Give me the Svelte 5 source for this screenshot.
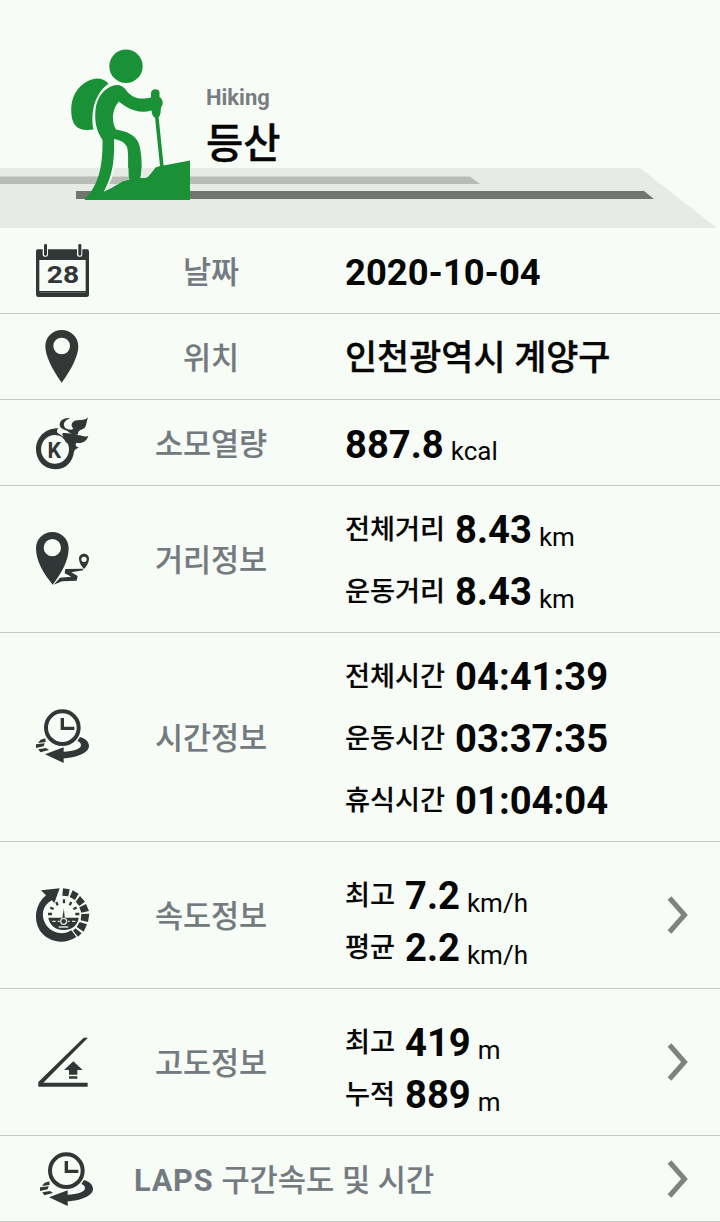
<script>
  const rows = [
    { icon: 'calendar', box: '0 -21 240 255', h: 86, label: '날짜', kind: 'date', lines: [{ v: '2020-10-04' }] },
    { icon: 'pin', box: '0 -18 240 255', h: 86, label: '위치', kind: 'place', lines: [{ v: '인천광역시 계양구' }] },
    { icon: 'kcal', box: '0 -24 240 255', h: 86, label: '소모열량', kind: 'one', lines: [{ v: '887.8', u: 'kcal' }] },
    {
      icon: 'route', box: '0 -117 240 438', h: 147, label: '거리정보', kind: 'wide',
      lines: [{ k: '전체거리', v: '8.43', u: 'km' }, { k: '운동거리', v: '8.43', u: 'km' }]
    },
    {
      icon: 'clock', box: '0 -207 240 624', h: 209, label: '시간정보', kind: 'wide',
      lines: [{ k: '전체시간', v: '04:41:39' }, { k: '운동시간', v: '03:37:35' }, { k: '휴식시간', v: '01:04:04' }]
    },
    {
      icon: 'speed', box: '0 -114 240 438', h: 147, label: '속도정보', kind: 'tight', more: true,
      lines: [{ k: '최고', v: '7.2', u: 'km/h' }, { k: '평균', v: '2.2', u: 'km/h' }]
    },
    {
      icon: 'slope', box: '0 -108 240 438', h: 147, label: '고도정보', kind: 'tight', more: true,
      lines: [{ k: '최고', v: '419', u: 'm' }, { k: '누적', v: '889', u: 'm' }]
    },
    { icon: 'clock', box: '-12 -27 240 255', h: 86, lead: 'LAPS', label: '구간속도 및 시간', kind: 'laps', more: true, lines: [] }
  ];
</script>

<main>
  <header>
    <svg class="scene" width="720" height="228" viewBox="0 0 720 228">
      <path d="M0 168H640L717 228H0Z" fill="#e7ebe5" />
      <path d="M0 176.500H470L480 184H0Z" fill="#b7bcb6" />
      <path d="M76 191H644L654 199H76Z" fill="#70756f" />
      <g fill="#1a9137">
        <circle cx="126" cy="66.300" r="16.700" />
        <path d="M108.500 83.500C103 77.500 95 77 88 81C76 87 71 98 71.200 111C71.500 125 77 132 93.500 129.500C91 117 92 96 108.500 83.500Z" />
        <path d="M109 87.500C115 83.500 122 84 126 90C131 97 138 100.500 151 97.500V93C151 88 159.500 88 159.500 92.500V97C163.500 99.500 163.500 104.500 161 107.500L160.500 113Q160 116.500 158.600 117L163.600 165.500L190 160.500V200H84.800L85.500 197.500L88.500 195C97 184 103 170 102.500 140C96 130 94.500 121 95.500 110C96.500 100 101 92 109 87.500Z" />
      </g>
      <path d="M119 101.500C127 108 137 114.500 151.500 110.500Q152 116.500 155 117.500L160 166L155.500 167.500Q150 174.500 145.500 178H140.500C142.500 170 142 154 139 144C136 135 126 131 116 129.500C111 121 112 109 119 101.500Z" fill="#f8fcf6" />
      <path d="M114 139C120 140 124.500 142 127 147C129 153 127.500 168 128.500 177L129.500 179.500L123 181C115 186 110 189 104 191.500C109 181 115 170 114 139Z" fill="#f8fcf6" />
      <path d="M114 168H121L128.500 168V176.500H112.100Q113.500 172 114 168Z" fill="#e7ebe5" />
      <path d="M112.200 176.500H128.300L129.500 179.500L123 181L115.200 185H108.500Q111 181 112.200 176.500Z" fill="#b7bcb6" />
      <path d="M108.900 184H117L104 191.300Z" fill="#e7ebe5" />
      <path d="M141.800 168H155L148.500 176.500L145.500 178H140.500Z" fill="#e7ebe5" />
    </svg>
    <p class="sub">Hiking</p>
    <h1>등산</h1>
  </header>

  {#each rows as row}
    <section class={row.kind} style:height="{row.h}px">
      <svg class="icon" viewBox={row.box} style:height="{row.h - 1}px">
        {#if row.icon === 'calendar'}
          <path fill-rule="evenodd" d="M38 43H186Q192 43 192 50V179Q192 186 185 186H40Q33 186 33 179V50Q33 43 38 43ZM43 75V168H182V75Z" />
          <path d="M44 172.500H181" stroke="#747b79" stroke-width="2" />
          <rect x="53" y="25" width="16" height="40" rx="6" fill="#f8fcf6" />
          <rect x="156" y="25" width="16" height="40" rx="6" fill="#f8fcf6" />
          <rect x="57" y="27" width="9" height="35" rx="4" />
          <rect x="160" y="27" width="9" height="35" rx="4" />
          <text x="114" y="144" text-anchor="middle" font-size="74" textLength="97" lengthAdjust="spacingAndGlyphs">28</text>
        {:else if row.icon === 'pin'}
          <path fill="#353737" fill-rule="evenodd" d="M110 30C137 30 160 51 160 79C160 108 139 149 110 188C82 149 61 108 61 79C61 51 83 30 110 30ZM110 53A25 25 0 1 0 110 103A25 25 0 1 0 110 53Z" />
        {:else if row.icon === 'kcal'}
          <path fill-rule="evenodd" d="M101 61C64 60 33 86 33 124C33 159 59 184 90 184C124 184 143 161 147 131C149 124 154 121 162 119C152 115 149 109 155 104C170 108 185 100 190 83C178 90 172 80 160 82C156 78 150 79 144 75C134 79 122 72 112 76C112 80 113 84 116 87C108 81 99 77 96 73C95 66 98 63 101 61ZM90 81A42 43 0 1 0 129 108C124 104 120 101 119 96L111 87Q101 81 90 81Z" />
          <path d="M135 30C117 28 103 38 104 51C106 62 118 67 133 69C119 62 113 51 119 42C123 36 129 34 135 30Z" />
          <path d="M190 27C180 38 166 35 155 37C140 40 135 52 145 62C138 67 129 65 122 60C126 73 143 81 160 79C156 66 172 66 179 59C186 51 183 41 190 27Z" />
          <text x="88" y="151" text-anchor="middle" font-size="64">K</text>
        {:else if row.icon === 'route'}
          <path fill-rule="evenodd" d="M82 21C109 21 131 42 131 70C131 106 110 145 83 179C55 145 33 108 33 70C33 42 55 21 82 21ZM82 42A26 26 0 1 0 82 94A26 26 0 1 0 82 42Z" />
          <path fill-rule="evenodd" d="M177 86C187 86 193 94 192 103C191 114 185 125 177 132C169 124 163 115 162 103C161 94 167 86 177 86ZM177 95A8 8 0 1 0 177 111A8 8 0 1 0 177 95Z" />
          <path d="M86 179L105 158L139 155L119 145L121 132L173 131L175 136L139 142L158 153L155 167L111 169Z" />
        {:else if row.icon === 'clock'}
          <circle cx="112" cy="77" r="49" fill="none" stroke="#313737" stroke-width="12" />
          <path d="M112 48V79H148" fill="none" stroke="#313737" stroke-width="10" />
          <path d="M165 105C182 110 192 120 192 132C192 151 158 167 116 169V183L60 157L116 136V149C145 148 168 141 168 129Q168 122 157 117Z" />
          <path d="M61 109L47 113L39 123L62 120ZM59 124L33 127V138L56 133ZM63 138L40 142L46 151L72 144Z" />
        {:else if row.icon === 'speed'}
          <path d="M48 31L104 25L88 69L80 61C52 76 47 108 62 133C78 159 113 168 139 151L154 171C115 197 66 185 44 151C24 117 31 72 63 46Z" />
          <path d="M114 25L134 28L130 49L112 47ZM143 31L161 41L150 60L134 51ZM165 48L180 65L163 78L152 65ZM183 72L192 93L169 98L163 82ZM169 102L193 101L189 126L167 121ZM164 126L186 133L176 155L155 141ZM151 145L170 160L159 170L144 152Z" />
          <path d="M70 113H161C159 132 145 149 116 150C87 149 73 132 70 113Z" />
          <path d="M117 58V70M94 66L98 76M139 66L134 76M76 83L86 87M155 83L145 87M69 102H81M151 102H163" stroke="#313737" stroke-width="7" />
          <path d="M116 84L121 118H111Z" stroke="#f8fcf6" stroke-width="1" />
          <circle cx="116" cy="124" r="9" fill="#313737" stroke="#dfe3df" stroke-width="4" />
          <path d="M82 124H92M98 124H104M129 124H134M141 124H151M101 141H130" stroke="#dfe3df" stroke-width="4" />
        {:else}
          <path d="M176 38H189L55 173H188V185H40V171Z" />
          <path d="M145 109L173 135H157V149H132V135H117ZM132 154H157V161H132Z" />
        {/if}
      </svg>
      <div class="label">{#if row.lead}<b>{row.lead}</b>{/if}{row.label}</div>
      <div class="values">
        {#each row.lines as line}
          <div class="line">
            {#if line.k}<span class="key">{line.k}</span>{/if}
            <strong>{line.v}</strong>
            {#if line.u}<span class="unit">{line.u}</span>{/if}
          </div>
        {/each}
      </div>
      {#if row.more}
        <svg class="more" width="24" height="42" viewBox="0 0 24 42"><path d="M3.500 4L18.500 21L3.500 38" fill="none" stroke="#80827f" stroke-width="5" /></svg>
      {/if}
    </section>
  {/each}
</main>

<style>
  :global(body) {
    margin: 0;
    background: #f8fcf6;
  }
  main {
    width: 720px;
    height: 1222px;
    overflow: hidden;
    font-family: Roboto, 'Noto Sans CJK KR', sans-serif;
    color: #060606;
  }
  header {
    position: relative;
    box-sizing: border-box;
    height: 228px;
    padding: 84px 0 0 206px;
  }
  .scene {
    position: absolute;
    left: 0;
    top: 0;
  }
  .sub,
  h1 {
    position: relative;
    margin: 0;
  }
  .sub {
    font-size: 22px;
    line-height: 28px;
    font-weight: 700;
    color: #777d83;
  }
  h1 {
    font-size: 40.5px;
    line-height: 64px;
    font-weight: 500;
    -webkit-text-stroke: 0.4px currentColor;
  }
  section {
    box-sizing: border-box;
    display: flex;
    border-bottom: 1px solid #c6cbc5;
    align-items: center;
  }
  .icon {
    flex: none;
    width: 80px;
    margin-left: 25px;
    fill: #313737;
    font-weight: 700;
  }
  .label {
    width: 212px;
    padding-top: 4px;
    text-align: center;
    font-size: 30.5px;
    line-height: 44px;
    font-weight: 500;
    color: #737a80;
    white-space: nowrap;
    -webkit-text-stroke: 0.15px currentColor;
  }
  .label b {
    font-weight: 700;
    margin-right: 8px;
    letter-spacing: 0.8px;
    -webkit-text-stroke: 0;
  }
  .values {
    flex: 1;
    margin-left: 28px;
    padding-top: 4px;
  }
  .line {
    display: flex;
    align-items: center;
    height: 62px;
    white-space: nowrap;
  }
  .tight .values {
    padding-top: 14px;
  }
  .tight .line {
    height: 52px;
  }
  .key {
    font-size: 27.2px;
    line-height: 40px;
    font-weight: 500;
    margin-right: 10px;
    -webkit-text-stroke: 0.15px currentColor;
  }
  strong {
    font-size: 38.2px;
    line-height: 44px;
    font-weight: 700;
  }
  .date strong {
    font-size: 36.4px;
  }
  .place strong {
    font-size: 34.9px;
    font-weight: 500;
    padding-top: 1px;
    -webkit-text-stroke: 0.35px currentColor;
  }
  .unit {
    font-size: 26px;
    line-height: 32px;
    margin-left: 7px;
    padding-top: 13px;
  }
  .laps .label {
    width: 330px;
    margin-left: 29px;
    text-align: left;
    font-size: 30.7px;
  }
  .laps .values {
    margin-left: 0;
  }
  .more {
    flex: none;
    margin-right: 30px;
  }
</style>
